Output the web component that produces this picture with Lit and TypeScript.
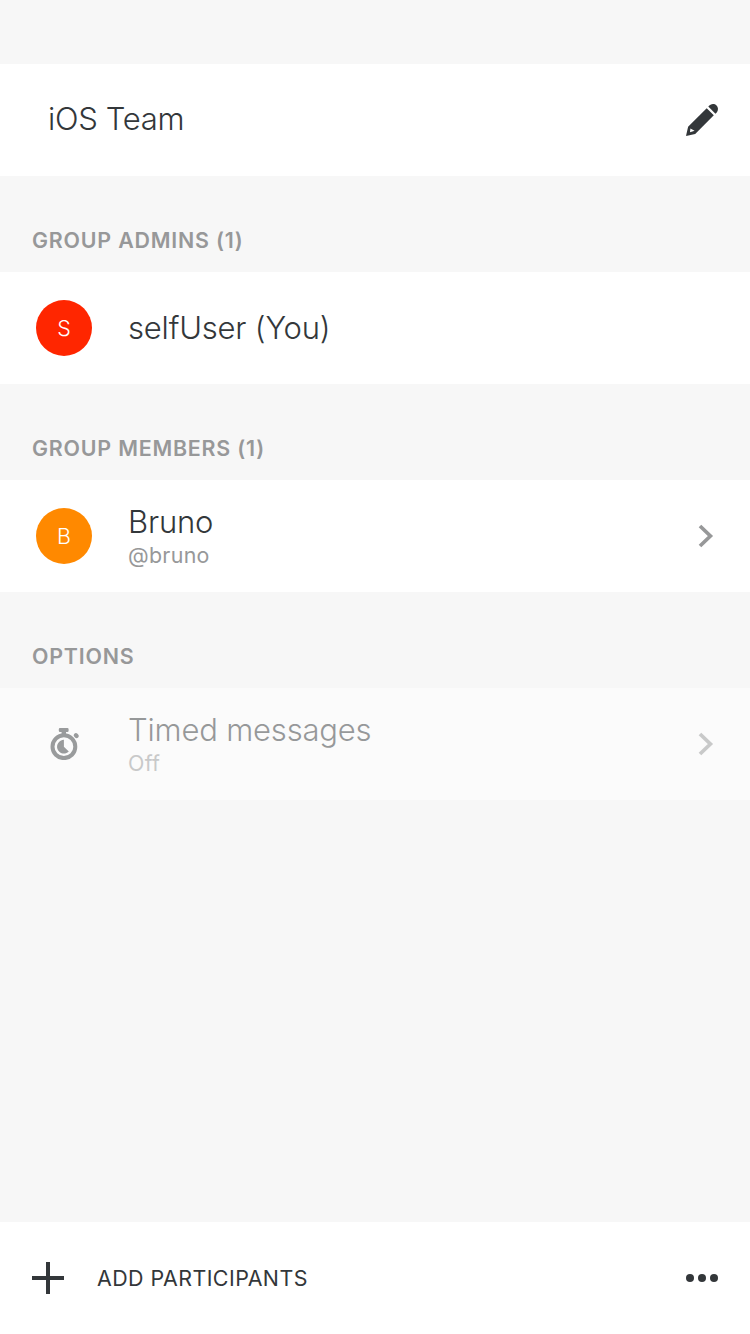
import { LitElement, html, css, svg, nothing } from "lit";
import { customElement } from "lit/decorators.js";

const pencil = svg`
  <path fill-rule="evenodd" d="M20.700 4.200 27.800 11.300 9.200 29.900 0 32 2.100 22.800ZM4.400 24.400 4 28.200 8.600 26.800Z"/>
  <path d="M22.300 2.600C24.600-.5 28.300-.7 30.500 1.500S32.500 7.400 29.400 9.700Z"/>`;

const stopwatch = svg`
  <path d="M12 0h7.400a1.200 1.200 0 0 1 1.200 1.200v1.600a1.200 1.200 0 0 1-1.200 1.200H18v3h-4.400V4H12a1.200 1.200 0 0 1-1.200-1.200V1.200A1.200 1.200 0 0 1 12 0Z"/>
  <circle cx="15.900" cy="18.700" r="11.400" fill="none" stroke="currentColor" stroke-width="4"/>
  <path d="M15.900 11.800v6.900l4.900 4.900A6.900 6.900 0 1 1 15.900 11.800Z"/>
  <path d="M27.900 7.300 28.600 8" stroke="currentColor" stroke-width="4.400" stroke-linecap="round"/>`;

@customElement("chevron-icon")
class ChevronIcon extends LitElement {
  static styles = css`
    :host { display: block; width: 32px; height: 32px; }
    svg { display: block; }
  `;
  render() {
    return html`<svg width="32" height="32" viewBox="0 0 32 32" fill="none" stroke="#979899" stroke-width="3.700">
      <path d="M14 6 24.400 16 14 26"/></svg>`;
  }
}

@customElement("section-title")
class SectionTitle extends LitElement {
  static styles = css`
    :host {
      display: block;
      box-sizing: border-box;
      height: 96px;
      padding: 48px 32px 0;
      font-size: 21.4px;
      line-height: 32px;
      font-weight: 600;
      letter-spacing: 0.8px;
      color: #979899;
      white-space: nowrap;
    }
  `;
  render() {
    return html`<slot></slot>`;
  }
}

@customElement("list-row")
class ListRow extends LitElement {
  static properties = {
    name: {},
    detail: {},
    arrow: { type: Boolean },
  };
  declare name: string;
  declare detail: string;
  declare arrow: boolean;

  static styles = css`
    :host {
      display: flex;
      align-items: center;
      box-sizing: border-box;
      height: 112px;
      padding: 0 32px 0 36px;
      background: #fff;
      color: #33373a;
    }
    .lead { width: 56px; display: flex; justify-content: center; margin-right: 36px; }
    .text { flex: 1; white-space: nowrap; }
    .name { font-size: 31px; line-height: 40px; font-weight: 300; letter-spacing: -0.19px; }
    .detail { padding-bottom: 2px; font-size: 21.4px; line-height: 26px; font-weight: 400; letter-spacing: 0.3px; color: #979899; }
    :host([disabled]) { background: #fbfbfb; }
    :host([disabled]) .text, :host([disabled]) chevron-icon { opacity: 0.5; }
  `;
  render() {
    return html`
      <div class="lead"><slot></slot></div>
      <div class="text">
        <div class="name">${this.name}</div>
        ${this.detail ? html`<div class="detail">${this.detail}</div>` : nothing}
      </div>
      ${this.arrow ? html`<chevron-icon></chevron-icon>` : nothing}
    `;
  }
}

@customElement("app-root")
class AppRoot extends LitElement {
  static styles = css`
    :host {
      display: flex;
      flex-direction: column;
      box-sizing: border-box;
      width: 750px;
      height: 1334px;
      padding-top: 64px;
      background: #f7f7f7;
      font-family: Inter, "Liberation Sans", sans-serif;
      color: #33373a;
    }
    svg { display: block; }
    .bar {
      display: flex;
      align-items: center;
      justify-content: space-between;
      box-sizing: border-box;
      height: 112px;
      background: #fff;
    }
    .title { padding: 0 32px 0 48px; font-size: 31px; line-height: 40px; font-weight: 300; letter-spacing: -0.3px; }
    .title > span { padding-bottom: 2px; }
    .avatar {
      width: 56px;
      height: 56px;
      border-radius: 50%;
      color: #fff;
      font-size: 21.4px;
      line-height: 56px;
      font-weight: 300;
      text-align: center;
    }
    .red { background: #ff2600; }
    .orange { background: #ff8900; }
    .timer { color: #999b9c; }
    .footer { margin-top: auto; padding: 0 32px; }
    .add { display: flex; align-items: center; gap: 33px; font-size: 21.4px; letter-spacing: 0.45px; }
  `;
  render() {
    return html`
      <div class="bar title">
        <span>iOS Team</span>
        <svg width="32" height="32" viewBox="0 0 32 32" fill="currentColor">${pencil}</svg>
      </div>
      <section-title>GROUP ADMINS (1)</section-title>
      <list-row name="selfUser (You)"><div class="avatar red">S</div></list-row>
      <section-title>GROUP MEMBERS (1)</section-title>
      <list-row name="Bruno" detail="@bruno" arrow><div class="avatar orange">B</div></list-row>
      <section-title>OPTIONS</section-title>
      <list-row disabled name="Timed messages" detail="Off" arrow>
        <svg class="timer" width="32" height="32" viewBox="0 0 32 32" fill="currentColor">${stopwatch}</svg>
      </list-row>
      <div class="bar footer">
        <div class="add">
          <svg width="32" height="32" viewBox="0 0 32 32" fill="currentColor"><path d="M14 0h4v14h14v4H18v14h-4V18H0v-4h14Z"/></svg>
          <span>ADD PARTICIPANTS</span>
        </div>
        <svg width="32" height="32" viewBox="0 0 32 32" fill="currentColor">
          <circle cx="4" cy="16" r="4"/><circle cx="16" cy="16" r="4"/><circle cx="28" cy="16" r="4"/>
        </svg>
      </div>
    `;
  }
}
